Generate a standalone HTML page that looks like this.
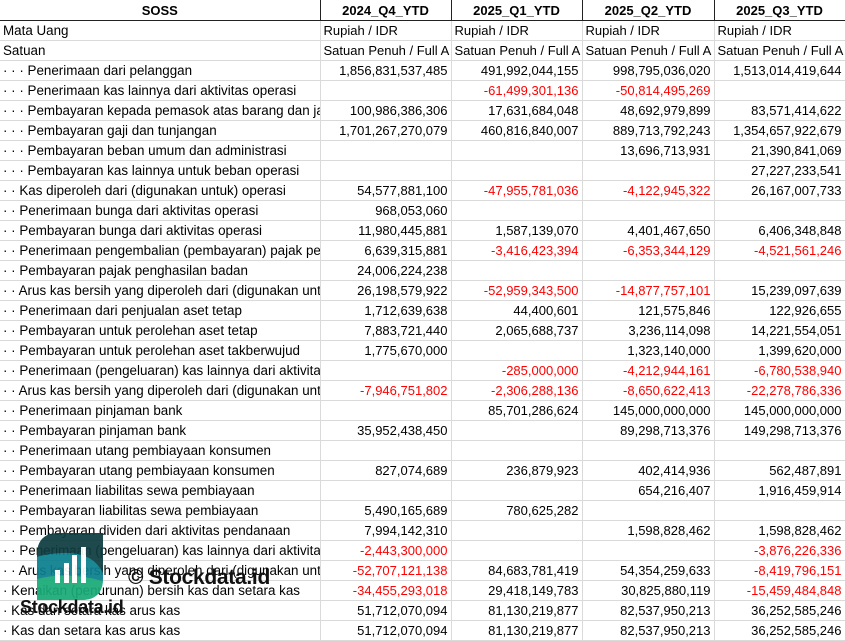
<!DOCTYPE html>
<html><head><meta charset="utf-8"><style>
body{margin:0;width:845px;height:641px;overflow:hidden;background:#fff;font-family:"Liberation Sans",Arial,sans-serif;font-size:13px;color:#000;position:relative}
table{border-collapse:collapse;table-layout:fixed;position:absolute;left:0;top:0;width:845px}
td{height:19px;padding:0 3px;border:1px solid #dadada;white-space:nowrap;overflow:hidden;text-overflow:clip;line-height:19px}
td:first-child{border-left:none;padding-left:3px;font-size:13.4px}
tr.h td{height:20px;font-weight:bold;text-align:center;border:1px solid #222;border-top:none;border-bottom:1px solid #222;font-size:13px}
tr.h td:first-child{border-left:none}
td.n{text-align:right}
.r{color:#ff0000}
</style></head><body>
<table>
<colgroup><col style="width:320px"><col style="width:131px"><col style="width:131px"><col style="width:132px"><col style="width:131px"></colgroup>
<tr class="h"><td>SOSS</td><td>2024_Q4_YTD</td><td>2025_Q1_YTD</td><td>2025_Q2_YTD</td><td>2025_Q3_YTD</td></tr>
<tr><td>Mata Uang</td><td>Rupiah / IDR</td><td>Rupiah / IDR</td><td>Rupiah / IDR</td><td>Rupiah / IDR</td></tr>
<tr><td>Satuan</td><td>Satuan Penuh / Full A</td><td>Satuan Penuh / Full A</td><td>Satuan Penuh / Full A</td><td>Satuan Penuh / Full A</td></tr>
<tr><td>· · · Penerimaan dari pelanggan</td><td class="n">1,856,831,537,485</td><td class="n">491,992,044,155</td><td class="n">998,795,036,020</td><td class="n">1,513,014,419,644</td></tr>
<tr><td>· · · Penerimaan kas lainnya dari aktivitas operasi</td><td class="n"></td><td class="n r">-61,499,301,136</td><td class="n r">-50,814,495,269</td><td class="n"></td></tr>
<tr><td>· · · Pembayaran kepada pemasok atas barang dan jasa</td><td class="n">100,986,386,306</td><td class="n">17,631,684,048</td><td class="n">48,692,979,899</td><td class="n">83,571,414,622</td></tr>
<tr><td>· · · Pembayaran gaji dan tunjangan</td><td class="n">1,701,267,270,079</td><td class="n">460,816,840,007</td><td class="n">889,713,792,243</td><td class="n">1,354,657,922,679</td></tr>
<tr><td>· · · Pembayaran beban umum dan administrasi</td><td class="n"></td><td class="n"></td><td class="n">13,696,713,931</td><td class="n">21,390,841,069</td></tr>
<tr><td>· · · Pembayaran kas lainnya untuk beban operasi</td><td class="n"></td><td class="n"></td><td class="n"></td><td class="n">27,227,233,541</td></tr>
<tr><td>· · Kas diperoleh dari (digunakan untuk) operasi</td><td class="n">54,577,881,100</td><td class="n r">-47,955,781,036</td><td class="n r">-4,122,945,322</td><td class="n">26,167,007,733</td></tr>
<tr><td>· · Penerimaan bunga dari aktivitas operasi</td><td class="n">968,053,060</td><td class="n"></td><td class="n"></td><td class="n"></td></tr>
<tr><td>· · Pembayaran bunga dari aktivitas operasi</td><td class="n">11,980,445,881</td><td class="n">1,587,139,070</td><td class="n">4,401,467,650</td><td class="n">6,406,348,848</td></tr>
<tr><td>· · Penerimaan pengembalian (pembayaran) pajak penghasilan</td><td class="n">6,639,315,881</td><td class="n r">-3,416,423,394</td><td class="n r">-6,353,344,129</td><td class="n r">-4,521,561,246</td></tr>
<tr><td>· · Pembayaran pajak penghasilan badan</td><td class="n">24,006,224,238</td><td class="n"></td><td class="n"></td><td class="n"></td></tr>
<tr><td>· · Arus kas bersih yang diperoleh dari (digunakan untuk)</td><td class="n">26,198,579,922</td><td class="n r">-52,959,343,500</td><td class="n r">-14,877,757,101</td><td class="n">15,239,097,639</td></tr>
<tr><td>· · Penerimaan dari penjualan aset tetap</td><td class="n">1,712,639,638</td><td class="n">44,400,601</td><td class="n">121,575,846</td><td class="n">122,926,655</td></tr>
<tr><td>· · Pembayaran untuk perolehan aset tetap</td><td class="n">7,883,721,440</td><td class="n">2,065,688,737</td><td class="n">3,236,114,098</td><td class="n">14,221,554,051</td></tr>
<tr><td>· · Pembayaran untuk perolehan aset takberwujud</td><td class="n">1,775,670,000</td><td class="n"></td><td class="n">1,323,140,000</td><td class="n">1,399,620,000</td></tr>
<tr><td>· · Penerimaan (pengeluaran) kas lainnya dari aktivitas investasi</td><td class="n"></td><td class="n r">-285,000,000</td><td class="n r">-4,212,944,161</td><td class="n r">-6,780,538,940</td></tr>
<tr><td>· · Arus kas bersih yang diperoleh dari (digunakan untuk)</td><td class="n r">-7,946,751,802</td><td class="n r">-2,306,288,136</td><td class="n r">-8,650,622,413</td><td class="n r">-22,278,786,336</td></tr>
<tr><td>· · Penerimaan pinjaman bank</td><td class="n"></td><td class="n">85,701,286,624</td><td class="n">145,000,000,000</td><td class="n">145,000,000,000</td></tr>
<tr><td>· · Pembayaran pinjaman bank</td><td class="n">35,952,438,450</td><td class="n"></td><td class="n">89,298,713,376</td><td class="n">149,298,713,376</td></tr>
<tr><td>· · Penerimaan utang pembiayaan konsumen</td><td class="n"></td><td class="n"></td><td class="n"></td><td class="n"></td></tr>
<tr><td>· · Pembayaran utang pembiayaan konsumen</td><td class="n">827,074,689</td><td class="n">236,879,923</td><td class="n">402,414,936</td><td class="n">562,487,891</td></tr>
<tr><td>· · Penerimaan liabilitas sewa pembiayaan</td><td class="n"></td><td class="n"></td><td class="n">654,216,407</td><td class="n">1,916,459,914</td></tr>
<tr><td>· · Pembayaran liabilitas sewa pembiayaan</td><td class="n">5,490,165,689</td><td class="n">780,625,282</td><td class="n"></td><td class="n"></td></tr>
<tr><td>· · Pembayaran dividen dari aktivitas pendanaan</td><td class="n">7,994,142,310</td><td class="n"></td><td class="n">1,598,828,462</td><td class="n">1,598,828,462</td></tr>
<tr><td>· · Penerimaan (pengeluaran) kas lainnya dari aktivitas</td><td class="n r">-2,443,300,000</td><td class="n"></td><td class="n"></td><td class="n r">-3,876,226,336</td></tr>
<tr><td>· · Arus kas bersih yang diperoleh dari (digunakan untuk)</td><td class="n r">-52,707,121,138</td><td class="n">84,683,781,419</td><td class="n">54,354,259,633</td><td class="n r">-8,419,796,151</td></tr>
<tr><td>· Kenaikan (penurunan) bersih kas dan setara kas</td><td class="n r">-34,455,293,018</td><td class="n">29,418,149,783</td><td class="n">30,825,880,119</td><td class="n r">-15,459,484,848</td></tr>
<tr><td>· Kas dan setara kas arus kas</td><td class="n">51,712,070,094</td><td class="n">81,130,219,877</td><td class="n">82,537,950,213</td><td class="n">36,252,585,246</td></tr>
<tr><td>· Kas dan setara kas arus kas</td><td class="n">51,712,070,094</td><td class="n">81,130,219,877</td><td class="n">82,537,950,213</td><td class="n">36,252,585,246</td></tr>
</table>
<svg style="position:absolute;left:37px;top:533px;opacity:0.93" width="66" height="67" viewBox="0 0 66 67">
<defs><clipPath id="c"><path d="M22 0H66V45Q66 67 44 67H0V22Q0 0 22 0Z"/></clipPath></defs>
<g clip-path="url(#c)">
<rect width="66" height="67" fill="#0b7f8e"/>
<path d="M0 0H66V40Q55 18 25 20Q8 21 0 24Z" fill="#0d3c40"/>
<path d="M0 46Q30 38 66 48V67H0Z" fill="#19ab78"/>
<rect x="18" y="37" width="5" height="13" fill="#fff"/>
<rect x="27" y="30" width="5" height="20" fill="#fff"/>
<rect x="35" y="22" width="5" height="28" fill="#fff"/>
<rect x="44" y="14" width="5" height="36" fill="#fff"/>
</g></svg>
<div style="position:absolute;left:20px;top:597px;font-weight:bold;font-size:18px;color:#111;letter-spacing:-0.3px">Stockdata.id</div>
<div style="position:absolute;left:128px;top:566px;font-weight:bold;font-size:21px;color:#111;letter-spacing:-0.3px">© Stockdata.id</div>
</body></html>
